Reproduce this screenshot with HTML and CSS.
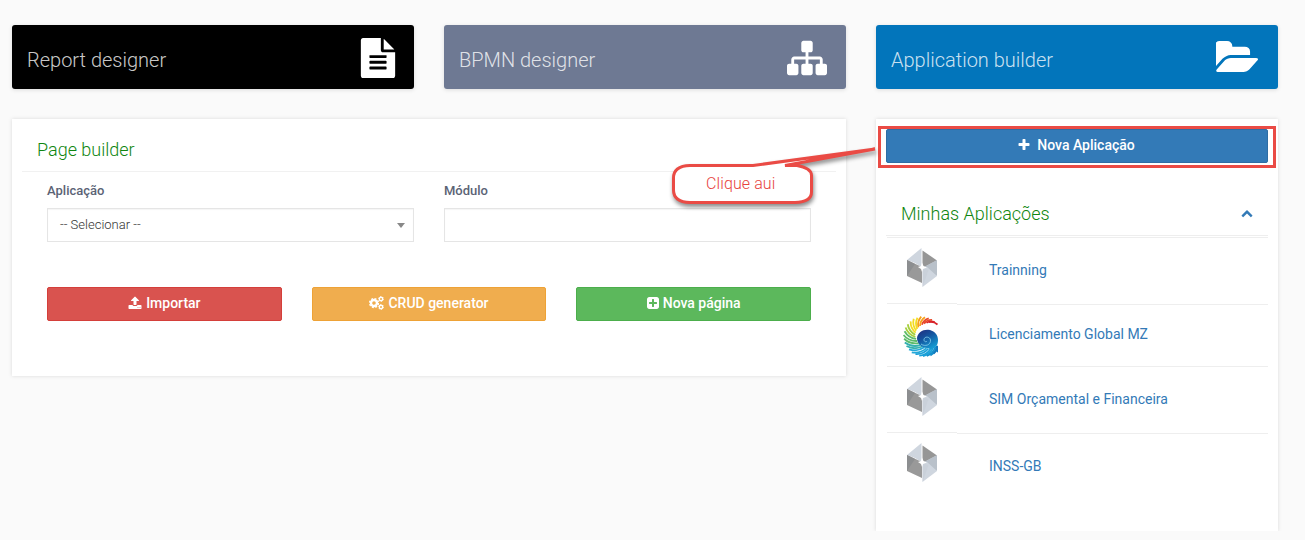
FILE: index.html
```html
<!DOCTYPE html>
<html lang="pt">
<head>
<meta charset="utf-8">
<title>Page builder</title>
<link rel="stylesheet" href="styles.css">
</head>
<body>
<svg class="defs" width="0" height="0">
  <symbol id="cube" viewBox="0 0 30 39">
    <path fill="#cfd6df" d="M14.5 0v19L8 15 0 12z"/>
    <path fill="#999" d="M0 12l15 7v16L0 28z"/>
    <path fill="#8c8e90" d="M0 12l8 4-8 12z"/>
    <path fill="#969696" d="M15.5 2.500L30 12.500 15.500 20z"/>
    <path fill="#b9c1ca" d="M30 12v16L16 19.500z"/>
    <path fill="#cfd6df" d="M15.500 20l4.500-1 10 9-14.500 11z"/>
    <path fill="#c5ccd5" d="M15.500 39V20l6 2z" opacity=".5"/>
    <path fill="#fff" d="M15 14.500l1.500 3.500 3.500 1.500-4 1.500-1 3-1-3-3-2 3-1z"/>
  </symbol>
</svg>
<div class="page">
  <div class="tiles">
    <a class="tile tile-report"><span>Report designer</span>
      <svg class="tile-icon" viewBox="0 0 1792 1792"><path d="M1596 476q14 14 28 36h-472v-472q22 14 36 28zm-476 164h544v1056q0 40-28 68t-68 28h-1344q-40 0-68-28t-28-68v-1600q0-40 28-68t68-28h800v544q0 40 28 68t68 28zm160 736v-64q0-14-9-23t-23-9h-704q-14 0-23 9t-9 23v64q0 14 9 23t23 9h704q14 0 23-9t9-23zm0-256v-64q0-14-9-23t-23-9h-704q-14 0-23 9t-9 23v64q0 14 9 23t23 9h704q14 0 23-9t9-23zm0-256v-64q0-14-9-23t-23-9h-704q-14 0-23 9t-9 23v64q0 14 9 23t23 9h704q14 0 23-9t9-23z"/></svg></a>
    <a class="tile tile-bpmn"><span>BPMN designer</span>
      <svg class="tile-icon" viewBox="0 0 1792 1792"><path d="M1792 1248v320q0 40-28 68t-68 28h-320q-40 0-68-28t-28-68v-320q0-40 28-68t68-28h96v-192h-512v192h96q40 0 68 28t28 68v320q0 40-28 68t-68 28h-320q-40 0-68-28t-28-68v-320q0-40 28-68t68-28h96v-192h-512v192h96q40 0 68 28t28 68v320q0 40-28 68t-68 28h-320q-40 0-68-28t-28-68v-320q0-40 28-68t68-28h96v-192q0-52 38-90t90-38h512v-192h-96q-40 0-68-28t-28-68v-320q0-40 28-68t68-28h320q40 0 68 28t28 68v320q0 40-28 68t-68 28h-96v192h512q52 0 90 38t38 90v192h96q40 0 68 28t28 68z"/></svg></a>
    <a class="tile tile-app"><span>Application builder</span>
      <svg class="tile-icon folder" viewBox="0 128 1815 1408" preserveAspectRatio="none"><path d="M1815 952q0 31-31 66l-336 396q-43 51-120.500 86.500t-143.500 35.500h-1088q-34 0-60.500-13t-26.500-43q0-31 31-66l336-396q43-51 120.500-86.500t143.500-35.500h1088q34 0 60.500 13t26.500 43zm-343-344v160h-832q-94 0-197 47.500t-164 119.500l-337 396-5 6q0-4-.5-12.500t-.5-12.500v-960q0-92 66-158t158-66h320q92 0 158 66t66 158v32h544q92 0 158 66t66 158z"/></svg></a>
  </div>
  <div class="cards">
    <section class="card builder">
      <h2 class="title">Page builder</h2>
      <div class="fields">
        <div class="field"><label>Aplicação</label><div class="control">-- Selecionar --<i class="caret"></i></div></div>
        <div class="field"><label>Módulo</label><div class="control"></div></div>
      </div>
      <div class="actions">
        <a class="btn danger"><svg viewBox="0 0 1792 1792"><path d="M1344 1472q0-26-19-45t-45-19-45 19-19 45 19 45 45 19 45-19 19-45zm256 0q0-26-19-45t-45-19-45 19-19 45 19 45 45 19 45-19 19-45zm128-224v320q0 40-28 68t-68 28h-1472q-40 0-68-28t-28-68v-320q0-40 28-68t68-28h427q21 56 70.500 92t110.500 36h256q61 0 110.500-36t70.500-92h427q40 0 68 28t28 68zm-325-648q-17 40-59 40h-256v448q0 26-19 45t-45 19h-256q-26 0-45-19t-19-45v-448h-256q-42 0-59-40-17-39 14-69l448-448q18-19 45-19t45 19l448 448q31 30 14 69z"/></svg>Importar</a>
        <a class="btn warning"><svg class="cogs" viewBox="0 0 15 14"><g fill="none" stroke="#fff"><circle cx="5" cy="7" r="3" stroke-width="2.400"/><circle cx="5" cy="7" r="4.500" stroke-width="1.300" stroke-dasharray="2 1.534"/><circle cx="12" cy="3" r="1.700" stroke-width="1.400"/><circle cx="12" cy="3" r="2.500" stroke-width=".8" stroke-dasharray="1.300 1.318"/><circle cx="12" cy="11" r="1.700" stroke-width="1.400"/><circle cx="12" cy="11" r="2.500" stroke-width=".8" stroke-dasharray="1.300 1.318"/></g></svg>CRUD generator</a>
        <a class="btn success"><svg viewBox="128 0 1536 1792" class="square"><path d="M1408 960v-128q0-26-19-45t-45-19h-320v-320q0-26-19-45t-45-19h-128q-26 0-45 19t-19 45v320h-320q-26 0-45 19t-19 45v128q0 26 19 45t45 19h320v320q0 26 19 45t45 19h128q26 0 45-19t19-45v-320h320q26 0 45-19t19-45zm256-544v960q0 119-84.500 203.500t-203.500 84.500h-960q-119 0-203.500-84.500t-84.500-203.500v-960q0-119 84.500-203.500t203.500-84.500h960q119 0 203.500 84.500t84.500 203.500z"/></svg>Nova página</a>
      </div>
    </section>
    <section class="card apps">
      <div class="new-app">
        <a class="btn primary"><svg viewBox="0 0 1792 1792"><path d="M1600 736v192q0 40-28 68t-68 28h-416v416q0 40-28 68t-68 28h-192q-40 0-68-28t-28-68v-416h-416q-40 0-68-28t-28-68v-192q0-40 28-68t68-28h416v-416q0-40 28-68t68-28h192q40 0 68 28t28 68v416h416q40 0 68 28t28 68z"/></svg>Nova Aplicação</a>
        <div class="highlight"></div>
      </div>
      <div class="apps-head"><h2>Minhas Aplicações</h2>
        <svg viewBox="0 0 1792 1792"><path d="M1683 1331l-166 165q-19 19-45 19t-45-19l-531-531-531 531q-19 19-45 19t-45-19l-166-165q-19-19-19-45.500t19-45.500l742-741q19-19 45-19t45 19l742 741q19 19 19 45.500t-19 45.500z"/></svg></div>
      <div class="app-list">
        <div class="logos">
          <div class="cell tall"><svg class="cube"><use href="#cube"/></svg></div>
          <div class="cell short"><svg class="shell" viewBox="0 0 35 41">
            <defs><linearGradient id="sea" x1="0" y1="0" x2=".6" y2="1"><stop offset="0" stop-color="#232a7c"/><stop offset=".45" stop-color="#14529d"/><stop offset="1" stop-color="#149bd2"/></linearGradient></defs>
            <g id="ribs"></g>
            <path fill="url(#sea)" d="M14 22C14.500 16 21 12.500 27 14 32 15.500 35 19 35 24c0 6-3 9-9 9.500 1-1 0-1.500-2-1.500-5 0-10-4-10-10z"/>
            <path fill="none" stroke="#7fc6e8" stroke-width=".9" d="M18 28c4 3 10 1 9.500-4-.5-3.500-6-4-6.500-.5-.2 2 2 3 3 1.500"/>
          </svg></div>
          <div class="cell tall"><svg class="cube"><use href="#cube"/></svg></div>
          <div class="cell tall"><svg class="cube"><use href="#cube"/></svg></div>
        </div>
        <div class="names">
          <a class="cell n1">Trainning</a>
          <a class="cell n2">Licenciamento Global MZ</a>
          <a class="cell n3">SIM Orçamental e Financeira</a>
          <a class="cell n4">INSS-GB</a>
        </div>
      </div>
    </section>
  </div>
</div>
<div class="callout">
  <svg viewBox="0 0 210 66"><path d="M83 21.500L205 5 115 21.500H127Q141.500 24 141.500 31.500V48Q141.500 58 125 58.500H20Q3.500 58 3.500 46V34Q3.500 22 20 21.500Z" fill="#fff" stroke="#ea4b45" stroke-width="3" stroke-linejoin="bevel"/></svg>
  <span>Clique aui</span>
</div>
<script src="shell.js"></script>
</body>
</html>
```
FILE: styles.css
```css
* { box-sizing: border-box; }
body { margin: 0; background: #fafafa; font-family: Roboto, "Liberation Sans", sans-serif; font-size: 14px; color: #5b6375; overflow: hidden; }
.defs { position: absolute; }
.page { width: 1278px; padding: 25px 0 0 12px; }
.tiles { display: flex; gap: 30px; }
.tile { display: flex; justify-content: space-between; width: 402px; height: 64px; padding: 13px 19px 0 15px; border-radius: 3px; color: rgba(255,255,255,.8); font-size: 20px; font-weight: 300; line-height: 44px; box-shadow: 0 1px 4px rgba(0,0,0,.12); }
.tile-report { background: #000; padding-right: 16.5px; }
.tile-bpmn { background: #6e7993; padding-right: 19.5px; }
.tile-app { background: #0275bb; }
.tile-icon { width: 40px; height: 40px; fill: #fff; }
.tile-icon.folder { width: 42px; height: 31px; margin: 3px 1px 0 0; }
.cards { display: flex; gap: 30px; align-items: flex-start; margin-top: 30px; }
.card { background: #fff; box-shadow: 0 0 4px rgba(0,0,0,.13); }
.builder { width: 834px; height: 257px; padding: 10px; }
h2 { margin: 0; color: #108610; font-size: 18px; font-weight: 300; }
.title { height: 43px; padding-left: 15px; line-height: 41px; border-bottom: 1px solid #f1f1f1; }
.fields { display: flex; gap: 30px; padding: 10px 25px 0; }
.field { flex: 1; }
label { display: block; height: 26px; font-size: 13px; font-weight: 500; line-height: 17px; color: #5b6375; }
.control { display: flex; justify-content: space-between; align-items: center; height: 34px; border: 1px solid #e5e5e5; padding: 0 8px 1px 12px; color: #333; font-size: 13px; font-weight: 300; box-shadow: inset 0 1px 1px rgba(0,0,0,.04); }
.caret { border: 4.5px solid transparent; border-top: 5px solid #888; border-bottom: 0; margin-top: 2px; }
.actions { display: flex; gap: 30px; padding: 45px 25px 0; }
.btn { display: flex; flex: 1; align-items: center; justify-content: center; gap: 4px; height: 34px; border: 1px solid; border-radius: 2px; color: #fff; font-size: 14px; font-weight: 500; padding-bottom: 3px; }
.btn svg { width: 14px; height: 14px; fill: #fff; }
.btn .cogs { width: 15px; }
.btn .square { width: 12px; }
.danger { background: #d9534f; border-color: #d43f3a; }
.warning { background: #f0ad4e; border-color: #eea236; }
.success { background: #5cb85c; border-color: #4cae4c; }
.primary { background: #337ab7; border-color: #2e6da4; gap: 6px; padding-right: 2px; }
.apps { width: 402px; height: 412px; padding: 10px; }
.new-app { position: relative; }
.highlight { position: absolute; inset: -3px -8px -5px; border: 3px solid #ea4b45; }
.apps-head { display: flex; justify-content: space-between; align-items: center; height: 73px; padding: 28px 15px 0; border-bottom: 1px solid #eee; }
.apps-head svg { width: 12px; height: 12px; fill: #337ab7; }
.app-list { display: flex; margin: 1px 0 0 1px; }
.logos { width: 70px; }
.names { flex: 1; }
.cell { display: block; border-top: 1px solid #eee; }
.tall { height: 66px; padding: 10px 0 0 20px; }
.short { height: 63px; padding: 12px 0 0 16px; }
.cube { display: block; width: 30px; height: 39px; }
.shell { display: block; width: 35px; height: 41px; }
.names .cell { padding-left: 32px; color: #337ab7; }
.n1 { height: 67px; line-height: 64px; }
.n2 { height: 62px; line-height: 58px; }
.n3 { height: 67px; line-height: 65px; }
.n4 { height: 67px; line-height: 65px; }
.callout { position: absolute; left: 670px; top: 144px; width: 210px; height: 66px; color: #e8433d; font-size: 16px; font-weight: 300; }
.callout svg { position: absolute; inset: 0; width: 210px; height: 66px; filter: drop-shadow(1px 3px 2px rgba(0,0,0,.45)); }
.callout span { position: absolute; left: 36px; top: 30px; line-height: 20px; letter-spacing: .1px; }
```
FILE: shell.js
```js
// Ribs run counter-clockwise from the red tip to the blue base of the nautilus.
const outer = [[34.5,8.5],[28,3],[19,.5],[10,3],[3,10],[.5,19],[2,28],[8,36],[17,40],[26,40],[34,36]];
const inner = [[33,8],[26,6],[20,8],[15.5,11],[13,15],[12,20],[14,25],[18,30],[23,32],[28,33],[34,30]];
const hues = ['#d8232a','#e8492a','#f6a01c','#f3dc22','#a5cf3d','#5dbb6a','#34b0b0','#23a8d8','#1aa0d8','#1590cc','#1479bd'];
const at = (points, t) => {
  const i = Math.min(points.length - 2, Math.floor(t)), f = t - i;
  return points[i].map((v, k) => v + (points[i + 1][k] - v) * f);
};
const count = 25;
let ribs = '';
for (let n = 0; n < count; n++) {
  const t = n / (count - 1) * 10;
  const [ox, oy] = at(outer, t), [ix, iy] = at(inner, Math.min(10, t + 1));
  const mx = (ox + ix) / 2 + (oy - iy) * .25, my = (oy + iy) / 2 - (ox - ix) * .25;
  ribs += `<path fill="none" stroke="${hues[Math.round(t)]}" stroke-width="1.8" d="M${ox} ${oy}Q${mx} ${my} ${ix} ${iy}"/>`;
}
document.getElementById('ribs').innerHTML = ribs;
```
